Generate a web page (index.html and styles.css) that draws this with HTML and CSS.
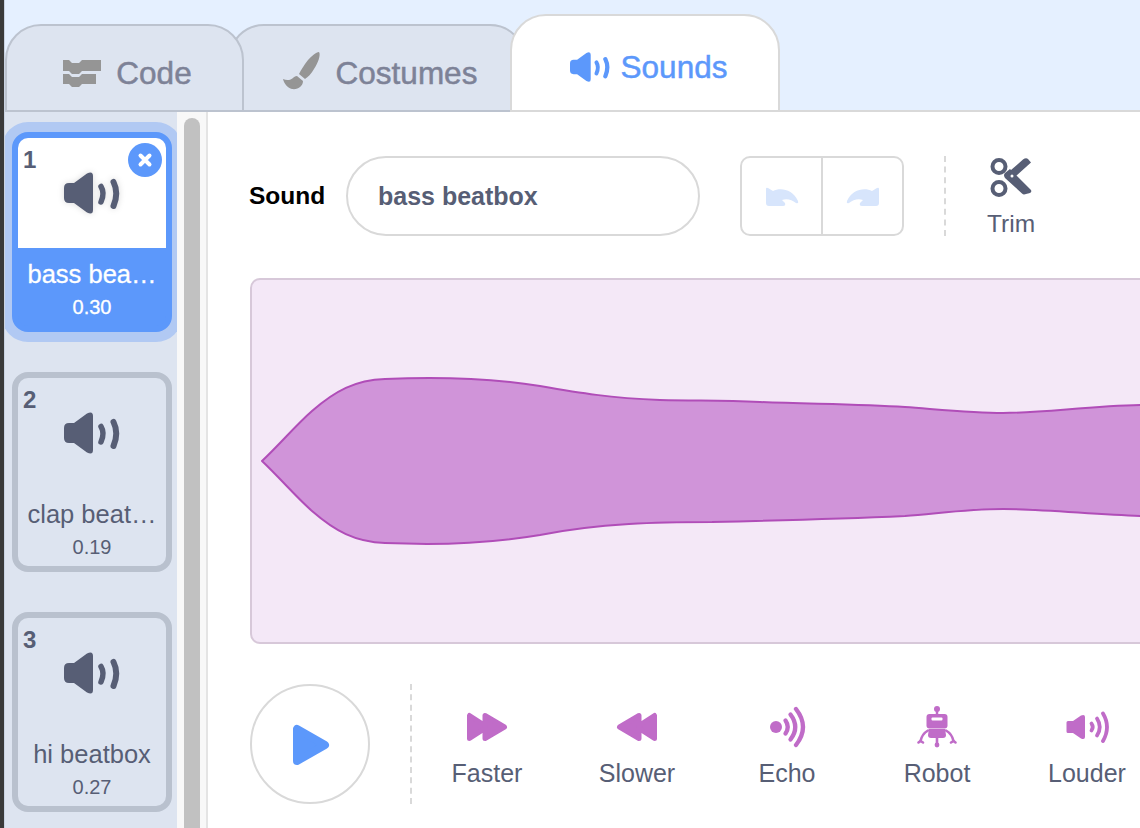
FILE: index.html
```html
<!DOCTYPE html>
<html lang="en">
<head>
<meta charset="utf-8">
<title>Sounds</title>
<link rel="stylesheet" href="styles.css">
</head>
<body>
<svg class="defs" width="0" height="0" aria-hidden="true">
  <symbol id="speaker" viewBox="0 0 56 42">
    <path fill="currentColor" d="M5 11H10L23 1.500Q29-1.500 29 4V38Q29 43.500 23 40.500L10 31H5Q0 31 0 26V16Q0 11 5 11Z"/>
    <path fill="none" stroke="currentColor" stroke-width="5.500" stroke-linecap="round" d="M37 14.500Q41 21 37 30"/>
    <path fill="none" stroke="currentColor" stroke-width="6" stroke-linecap="round" d="M49.500 10Q55 21 49.500 34"/>
  </symbol>
</svg>
<div class="edge"></div>
<div class="app">
  <nav class="tabs">
    <div class="tab tab-code">
      <svg class="tab-icon" width="40" height="28" viewBox="0 0 40 28"><path fill="#959595" d="M1 1H7L10 4H17L20 1H39V12H20L17 15H10L7 12H1ZM1 15H7L10 18H17L20 15H34V25H20L17 28H10L7 25H1Z"/></svg>
      <span>Code</span>
    </div>
    <div class="tab tab-costumes">
      <svg class="tab-icon tab-brush" width="40" height="40" viewBox="0 0 40 40"><path fill="#959595" d="M37 1C39 4 36 12 32 18C29 23 26 26 23 28L17 23C19 19 22 14 26 9C30 5 34 1 37 1ZM15 25L21 30C21 35 16 39 10 38C6 37 2 33 1 28C5 30 9 29 11 27C12 26 13 25 15 25Z"/></svg>
      <span>Costumes</span>
    </div>
    <div class="tab tab-sounds">
      <svg class="tab-icon" width="40" height="32"><use href="#speaker"/></svg>
      <span>Sounds</span>
    </div>
  </nav>
  <div class="main">
    <aside class="sidebar">
      <div class="card card-selected">
        <div class="thumb"><svg class="thumb-icon" width="56" height="42"><use href="#speaker"/></svg></div>
        <span class="num">1</span>
        <span class="delete"><svg width="16" height="16" viewBox="0 0 16 16"><path d="M3.500 3.500L12.500 12.500M12.500 3.500L3.500 12.500" fill="none" stroke="#fff" stroke-width="4" stroke-linecap="round"/></svg></span>
        <div class="name">bass bea…</div>
        <div class="dur">0.30</div>
      </div>
      <div class="card">
        <div class="thumb"><svg class="thumb-icon" width="56" height="42"><use href="#speaker"/></svg></div>
        <span class="num">2</span>
        <div class="name">clap beat…</div>
        <div class="dur">0.19</div>
      </div>
      <div class="card">
        <div class="thumb"><svg class="thumb-icon" width="56" height="42"><use href="#speaker"/></svg></div>
        <span class="num">3</span>
        <div class="name">hi beatbox</div>
        <div class="dur">0.27</div>
      </div>
    </aside>
    <div class="scrollbar"><div class="thumb-bar"></div></div>
    <section class="editor">
      <div class="row-top">
        <span class="field-label">Sound</span>
        <div class="name-input">bass beatbox</div>
        <div class="history">
          <div class="hist-btn">
            <svg width="34" height="20" viewBox="0 0 34 20"><path fill="#d7e5fc" d="M1 2Q1 0 3 1L8 4C15 0 28 2 33 14Q34 17 31 16C27 13 22 11 17 13L20 16Q21 19 18 19H4Q1 19 1 16Z"/></svg>
          </div>
          <div class="hist-btn hist-redo">
            <svg width="34" height="20" viewBox="0 0 34 20"><path fill="#d7e5fc" d="M33 2Q33 0 31 1L26 4C19 0 6 2 1 14Q0 17 3 16C7 13 12 11 17 13L14 16Q13 19 16 19H30Q33 19 33 16Z"/></svg>
          </div>
        </div>
        <div class="dash"></div>
        <div class="trim">
          <svg width="44" height="42" viewBox="0 0 44 42">
            <circle cx="10" cy="10.500" r="6.500" fill="none" stroke="#575e75" stroke-width="4"/>
            <circle cx="10" cy="32.500" r="6.500" fill="none" stroke="#575e75" stroke-width="4"/>
            <path fill="#575e75" d="M34 3.500Q37 1.500 39 3L42 6.500L27 20L22 14ZM16 17L21 13L42 34Q43 36 41 37L35 38.500Q34 38.500 33 37.500L16 22Q14 19 16 17Z"/>
            <circle cx="23" cy="20" r="1.500" fill="#fff"/>
          </svg>
          <span>Trim</span>
        </div>
      </div>
      <div class="wave">
        <svg width="996" height="362" viewBox="252 280 996 362">
          <path fill="#d094d9" stroke="#b04db8" stroke-width="2" stroke-linejoin="round" d="M262 461C280 444 296 425 312 411C335 391 355 380 385 379C430 377 490 378 540 386C580 393 610 398 660 400C700 401 720 400 760 402C810 404 860 404 905 407C945 410 975 413 1003 413C1040 413 1090 406 1140 405L1250 405L1250 516L1140 516C1090 514 1040 509 1003 509C965 509 935 514 905 516C860 518 800 520 712 522C660 522 600 523 540 535C510 540 470 544 427 544L385 543C355 542 335 531 312 511C296 497 280 478 262 461Z"/>
        </svg>
      </div>
      <div class="row-bottom">
        <div class="play">
          <svg width="40" height="44" viewBox="0 0 40 44"><path fill="#5c98fb" stroke="#5c98fb" stroke-width="8" stroke-linejoin="round" d="M5 7V39L33 23Z"/></svg>
        </div>
        <div class="dash dash-tall"></div>
        <div class="effects">
          <div class="effect">
            <svg class="fx" width="48" height="46" viewBox="0 0 48 46"><path fill="#c06cc8" stroke="#c06cc8" stroke-width="5" stroke-linejoin="round" d="M6.500 11.500V34.500L22 24.500V34.500L41.500 23L22 11.500V21.500Z"/></svg>
            <span>Faster</span>
          </div>
          <div class="effect">
            <svg class="fx" width="48" height="46" viewBox="0 0 48 46"><path fill="#c06cc8" stroke="#c06cc8" stroke-width="5" stroke-linejoin="round" d="M41.500 11.500V34.500L26 24.500V34.500L6.500 23L26 11.500V21.500Z"/></svg>
            <span>Slower</span>
          </div>
          <div class="effect">
            <svg class="fx" width="48" height="46" viewBox="0 0 48 46">
              <circle cx="13" cy="23" r="6" fill="#c06cc8"/>
              <g fill="none" stroke="#c06cc8" stroke-width="4.300" stroke-linecap="round">
                <path d="M22.500 16.500Q27 23 22.500 29.500"/>
                <path d="M27.500 10.500Q37 23 27.500 35.500"/>
                <path d="M33 5Q47 23 33 41"/>
              </g>
            </svg>
            <span>Echo</span>
          </div>
          <div class="effect">
            <svg class="fx" width="48" height="46" viewBox="0 0 48 46">
              <circle cx="24" cy="5" r="3" fill="#c06cc8"/>
              <path d="M24 6V11" stroke="#c06cc8" stroke-width="2.500"/>
              <rect x="13.500" y="10" width="21" height="14.500" rx="3" fill="#c06cc8"/>
              <rect x="18.500" y="13.500" width="11" height="3" rx="1" fill="#fff"/>
              <path fill="#c06cc8" d="M16 25H32L33 31Q33 34 30 34H18Q15 34 15 31Z"/>
              <g fill="none" stroke="#c06cc8" stroke-width="2.600" stroke-linecap="round">
                <path d="M15 26.500Q9 30 7.500 37"/>
                <path d="M33 26.500Q39 30 40.500 37"/>
                <path d="M24 34V41"/>
                <path d="M5.500 38.500L7.500 37L10 38.500M38 38.500L40.500 37L42.500 38.500"/>
              </g>
              <circle cx="24" cy="41" r="2.400" fill="#c06cc8"/>
            </svg>
            <span>Robot</span>
          </div>
          <div class="effect">
            <svg class="fx" width="48" height="46" viewBox="0 0 48 46">
              <path fill="#c06cc8" d="M5 17H10L18 11.500Q22 10 22 13V33Q22 36 18 34.500L10 29H5Q3.500 29 3.500 27.500V18.500Q3.500 17 5 17Z"/>
              <g fill="none" stroke="#c06cc8" stroke-width="3.800" stroke-linecap="round">
                <path d="M28.500 19.500Q31 23 28.500 26.500"/>
                <path d="M34 14.500Q39.500 23 34 31.500"/>
                <path d="M40 9.500Q48 23 40 37"/>
              </g>
            </svg>
            <span>Louder</span>
          </div>
        </div>
      </div>
    </section>
  </div>
</div>
</body>
</html>
```

FILE: styles.css
```css
* { box-sizing: border-box; }
html, body { margin: 0; height: 100%; }
body {
  display: flex;
  width: 1140px;
  height: 828px;
  overflow: hidden;
  background: #fff;
  color: #575e75;
  font-family: "Liberation Sans", Arial, sans-serif;
}
.defs { position: absolute; }
.edge { width: 4px; flex: none; background: #3a3a3a; }
.app { flex: 1; min-width: 0; min-height: 0; display: flex; flex-direction: column; border-left: 1px solid #c9d3e2; }

.tabs {
  height: 112px;
  flex: none;
  display: flex;
  align-items: flex-end;
  background: #e5f0ff;
  border-bottom: 2px solid #d9d9d9;
}
.tab {
  display: flex;
  align-items: center;
  justify-content: center;
  gap: 14px;
  height: 88px;
  margin-bottom: -2px;
  background: #dde4f0;
  border: 2px solid #bcc3cf;
  border-radius: 36px 36px 0 0;
  color: #7d8297;
  font-size: 31.500px;
  -webkit-text-stroke: 0.5px currentColor;
  padding: 10px 0 0 5px;
}
.tab-code { width: 239px; position: relative; z-index: 2; }
.tab-costumes { width: 298px; margin-left: -16px; padding-left: 5px; position: relative; z-index: 1; }
.tab-sounds {
  width: 270px;
  height: 98px;
  margin-left: -16px;
  position: relative;
  z-index: 3;
  gap: 11px;
  padding: 8px 0 0 7px;
  background: #fff;
  border-color: #d9d9d9;
  color: #5c98fb;
}
.tab-icon { flex: none; }
.tab-brush { margin-bottom: 4px; }

.main { flex: 1; min-height: 0; display: flex; overflow: hidden; }
.sidebar {
  width: 172px;
  flex: none;
  display: flex;
  flex-direction: column;
  gap: 40px;
  padding: 20px 0 0 7px;
  overflow: hidden;
  background: #dde4f0;
}
.card {
  position: relative;
  flex: none;
  width: 160px;
  height: 200px;
  border: 6px solid #b9c1ce;
  border-radius: 16px;
  text-align: center;
}
.card-selected {
  background: #5c98fb;
  border-color: #5c98fb;
  color: #fff;
  box-shadow: 0 0 0 10px #b1c9f3;
}
.thumb { height: 110px; padding-top: 34px; text-align: center; }
.thumb-icon { display: block; margin: 0 auto; color: #575e75; }
.card-selected .thumb { background: #fff; border-radius: 10px 10px 0 0; }
.card-selected .thumb-icon { filter: drop-shadow(0 0 3px rgba(0, 0, 0, 0.15)); }
.num {
  position: absolute;
  left: 5px;
  top: 8px;
  font-size: 24px;
  font-weight: bold;
  line-height: 28px;
  color: #575e75;
}
.delete {
  position: absolute;
  right: 4px;
  top: 5px;
  width: 34px;
  height: 34px;
  border-radius: 50%;
  background: #5c98fb;
  display: flex;
  align-items: center;
  justify-content: center;
}
.name {
  margin-top: 12px;
  font-size: 25.500px;
  line-height: 28px;
  white-space: nowrap;
}
.dur { margin-top: 7px; font-size: 20px; line-height: 24px; }
.card-selected .dur, .card-selected .name { -webkit-text-stroke: 0.3px currentColor; }

.scrollbar {
  width: 31px;
  flex: none;
  display: flex;
  padding: 6px 0 0 7px;
  background: #f8f8f8;
  border-right: 2px solid #e4e4e4;
}
.thumb-bar { width: 16px; background: #c1c1c1; border-radius: 8px 8px 0 0; }

.editor {
  flex: 1;
  min-width: 0;
  overflow: hidden;
  padding: 44px 0 0 42px;
}
.row-top { display: flex; align-items: stretch; height: 80px; width: 900px; }
.field-label {
  align-self: center;
  width: 97px;
  margin-left: -1px;
  font-size: 24.500px;
  font-weight: bold;
  color: #000;
}
.name-input {
  width: 354px;
  border: 2px solid #d9d9d9;
  border-radius: 40px;
  padding-left: 30px;
  display: flex;
  align-items: center;
  font-size: 25px;
  font-weight: bold;
}
.history {
  display: flex;
  width: 164px;
  margin-left: 40px;
  border: 2px solid #d9d9d9;
  border-radius: 10px;
}
.hist-btn { flex: 1; display: flex; align-items: center; justify-content: center; padding-top: 2px; }
.hist-redo { border-left: 2px solid #d9d9d9; }
.dash { width: 2px; margin-left: 40px; border-left: 2px dashed #d9d9d9; }
.trim {
  width: 48px;
  margin-left: 41px;
  display: flex;
  flex-direction: column;
  align-items: center;
  font-size: 24.500px;
  line-height: 28px;
  gap: 12px;
}
.trim svg { display: block; flex: none; }

.wave {
  width: 1000px;
  height: 366px;
  margin-top: 42px;
  background: #f4e8f7;
  border: 2px solid #d7c8d9;
  border-radius: 10px;
  overflow: hidden;
}
.wave svg { display: block; }
.row-bottom { display: flex; height: 120px; margin-top: 40px; width: 1100px; }
.play {
  width: 120px;
  height: 120px;
  flex: none;
  border: 2px solid #d9d9d9;
  border-radius: 50%;
  display: flex;
  align-items: center;
  justify-content: center;
  padding-left: 4px;
}
.dash-tall { flex: none; }
.effects { display: flex; flex: none; }
.effect {
  width: 150px;
  flex: none;
  display: flex;
  flex-direction: column;
  align-items: center;
  padding-top: 20px;
  font-size: 25px;
  line-height: 28px;
  gap: 9px;
}
.fx { display: block; flex: none; }
```
